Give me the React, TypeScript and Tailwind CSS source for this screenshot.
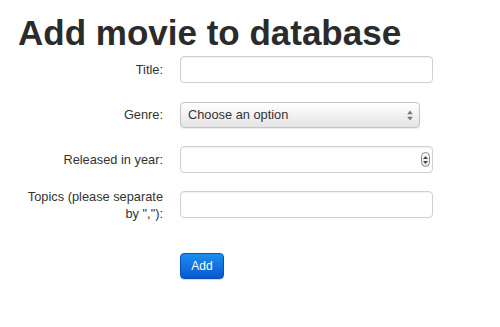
export default function App() {
  return (
    <div className="min-h-[327px] w-[500px] bg-white pl-[18px] font-['Liberation_Sans',Arial,sans-serif] text-[#333]">
      <h1 className="pt-[15px] text-[35px] leading-none font-bold text-[#2b2b2b]">
        Add movie to database
      </h1>

      <form className="mt-[6px] flex flex-col gap-[18px]">
        {/* Title */}
        <div className="flex h-[27px] items-center">
          <label className="w-[145px] text-right text-[12.8px] leading-[16px]">Title:</label>
          <input
            type="text"
            className="ml-[17px] h-[27px] w-[253px] rounded-[4px] border border-[#d0d0d0] bg-white shadow-[inset_0_1px_1px_rgba(0,0,0,0.06)] outline-none"
          />
        </div>

        {/* Genre */}
        <div className="flex h-[27px] items-center">
          <label className="w-[145px] text-right text-[12.8px] leading-[16px]">Genre:</label>
          <div className="relative ml-[17px] h-[26px] w-[240px]">
            <select className="h-full w-full appearance-none rounded-[4px] border border-[#c4c4c4] bg-gradient-to-b from-white to-[#e4e4e4] pl-[7px] text-[12.8px] text-[#333] shadow-[0_1px_1px_rgba(0,0,0,0.08)] outline-none">
              <option>Choose an option</option>
            </select>
            <svg className="pointer-events-none absolute top-[8px] right-[7px]" width="6" height="11" viewBox="0 0 6 11">
              <path d="M3 0.5 L5.8 4.3 L0.2 4.3 Z" fill="#777" />
              <path d="M3 10.5 L5.8 6.7 L0.2 6.7 Z" fill="#777" />
            </svg>
          </div>
        </div>

        {/* Year */}
        <div className="flex h-[27px] items-center">
          <label className="w-[145px] text-right text-[12.8px] leading-[16px]">Released in year:</label>
          <div className="relative ml-[17px] h-[27px] w-[253px]">
            <input
              type="text"
              className="h-full w-full rounded-[4px] border border-[#d0d0d0] bg-white shadow-[inset_0_1px_1px_rgba(0,0,0,0.06)] outline-none"
            />
            <span className="pointer-events-none absolute top-[6px] right-[3px] flex h-[15px] w-[9px] flex-col items-center justify-center gap-[2px] rounded-full border border-[#888] bg-gradient-to-b from-white to-[#e8e8e8]">
              <svg width="5" height="3" viewBox="0 0 5 3">
                <path d="M2.5 0 L5 3 L0 3 Z" fill="#444" />
              </svg>
              <svg width="5" height="3" viewBox="0 0 5 3">
                <path d="M2.5 3 L5 0 L0 0 Z" fill="#444" />
              </svg>
            </span>
          </div>
        </div>

        {/* Topics */}
        <div className="flex h-[27px] items-center">
          <label className="w-[145px] text-right text-[12.8px] leading-[17px]">Topics (please separate by ","):</label>
          <input
            type="text"
            className="ml-[17px] h-[27px] w-[253px] rounded-[4px] border border-[#d0d0d0] bg-white shadow-[inset_0_1px_1px_rgba(0,0,0,0.06)] outline-none"
          />
        </div>

        <div className="mt-[17px] pl-[162px]">
          <button
            type="submit"
            className="h-[26px] w-[44px] rounded-[4px] border border-[#0a4fb8] bg-gradient-to-b from-[#1d8ef0] to-[#0a58d0] text-[12px] text-white shadow-[0_1px_1px_rgba(0,0,0,0.15)]"
          >
            Add
          </button>
        </div>
      </form>
    </div>
  );
}
